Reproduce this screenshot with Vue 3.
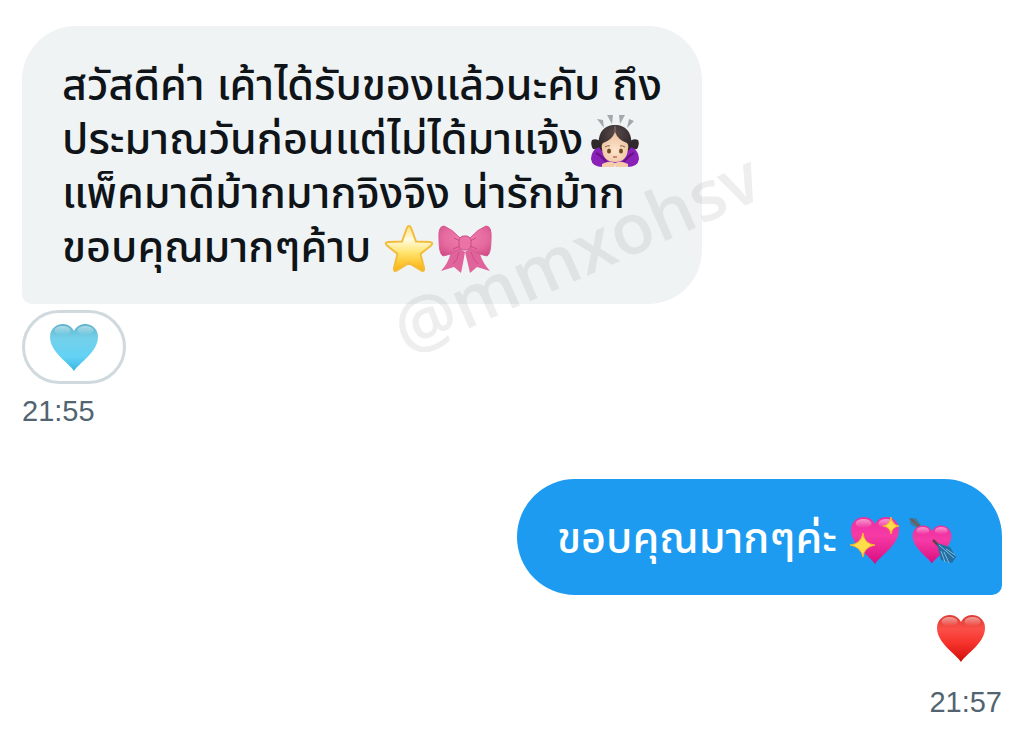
<script setup>
const received = {
  lines: [
    { text: 'สวัสดีค่า เค้าได้รับของแล้วนะคับ ถึง', icons: [] },
    { text: 'ประมาณวันก่อนแต่ไม่ได้มาแจ้ง', icons: ['bowing'] },
    { text: 'แพ็คมาดีม้ากมากจิงจิง น่ารักม้าก', icons: [] },
    { text: 'ขอบคุณมากๆค้าบ ', icons: ['star', 'ribbon'] },
  ],
  time: '21:55',
}
const sent = { text: 'ขอบคุณมากๆค่ะ ', time: '21:57' }
</script>

<template>
  <main class="chat">
    <svg class="defs" aria-hidden="true">
      <defs>
        <linearGradient id="gold" x1="0" y1="0" x2="0" y2="1">
          <stop offset="0" stop-color="#ffe27a" /><stop offset=".3" stop-color="#fffbe0" />
          <stop offset=".6" stop-color="#ffe36a" /><stop offset="1" stop-color="#fbae08" />
        </linearGradient>
        <linearGradient id="blue" x1="0" y1="0" x2="0" y2="1">
          <stop offset="0" stop-color="#5fb2cb" /><stop offset=".3" stop-color="#74d0ea" />
          <stop offset=".7" stop-color="#63d2f5" /><stop offset="1" stop-color="#38b6e4" />
        </linearGradient>
        <linearGradient id="red" x1="0" y1="0" x2="0" y2="1">
          <stop offset="0" stop-color="#dc3a34" /><stop offset=".3" stop-color="#fa4f47" />
          <stop offset=".6" stop-color="#f6322c" /><stop offset="1" stop-color="#cf0d0a" />
        </linearGradient>
        <linearGradient id="pink" x1="0" y1="0" x2="0" y2="1">
          <stop offset="0" stop-color="#ec2f9f" /><stop offset=".4" stop-color="#f63aa6" />
          <stop offset="1" stop-color="#d90d80" />
        </linearGradient>
        <linearGradient id="shine" x1="0" y1="0" x2="0" y2="1">
          <stop offset="0" stop-color="#fff" stop-opacity=".5" /><stop offset="1" stop-color="#fff" stop-opacity="0" />
        </linearGradient>
        <radialGradient id="bow" cx=".5" cy=".4" r=".7">
          <stop offset="0" stop-color="#f07fb0" /><stop offset=".6" stop-color="#e56a9f" />
          <stop offset="1" stop-color="#cf4c85" />
        </radialGradient>
        <radialGradient id="skin" cx=".5" cy=".6" r=".6">
          <stop offset="0" stop-color="#fde5ce" /><stop offset="1" stop-color="#ecc09c" />
        </radialGradient>
        <radialGradient id="hair" cx=".5" cy=".3" r=".7">
          <stop offset="0" stop-color="#594a49" /><stop offset="1" stop-color="#282225" />
        </radialGradient>
        <symbol id="heart" viewBox="0 0 52 52">
          <path d="M26 50C21 42 2 31 2 16C2 7 9 3 15 3C20 3 24 6 26 10C28 6 32 3 37 3C43 3 50 7 50 16C50 31 31 42 26 50Z" />
          <ellipse cx="14.500" cy="9.500" rx="8" ry="4.500" fill="url(#shine)" />
          <ellipse cx="37.500" cy="9.500" rx="8" ry="4.500" fill="url(#shine)" />
        </symbol>
      </defs>
    </svg>

    <section class="message incoming">
      <div class="bubble">
        <p v-for="line in received.lines" :key="line.text" class="line">
          {{ line.text }}<template v-for="icon in line.icons" :key="icon">
            <svg v-if="icon === 'bowing'" class="emoji tall" viewBox="0 0 52 56" role="img" aria-label="bowing">
              <path d="M8 6l6 1 1 8zM18 2h6l-1 9zM30 2h6l-5 9zM40 6l5 2-7 7z" fill="#a3a8aa" />
              <path d="M3 27q4-2 8 1v9l-7-1q-3-5-1-9zM49 27q-4-2-8 1v9l7-1q3-5 1-9z" fill="#30282b" />
              <path d="M2 46Q3 34 13 34H39Q49 34 50 46Q49 54 38 54L26 50L14 54Q3 54 2 46Z" fill="#8b22b8" />
              <path d="M7 40q6 3 12 11M45 40q-6 3-12 11" stroke="#671386" stroke-width="2" fill="none" />
              <path d="M10 34C8 20 15 12 26 12S44 20 42 34L37 41H15Z" fill="url(#hair)" />
              <path d="M13 36Q12 32 14 30Q23 27 26 19Q29 27 38 30Q40 32 39 36Q38 49 26 49Q14 49 13 36Z" fill="url(#skin)" />
              <path d="M26 13V20" stroke="#8b7977" />
              <path d="M13 51q6-3 10-2l3 1 3-1q4-1 10 2v3H27l-1-2-1 2H13z" fill="#f4cca9" />
              <ellipse cx="20" cy="38" rx="2" ry="2.500" fill="#6d4b1e" /><ellipse cx="32" cy="38" rx="2" ry="2.500" fill="#6d4b1e" />
              <path d="M16 34q3-2 5-1M31 33q2-1 5 1" stroke="#80603f" fill="none" />
              <path d="M24 44h4" stroke="#c06a58" stroke-width="1.500" />
            </svg>
            <svg v-else-if="icon === 'star'" class="emoji" viewBox="0 0 52 52" role="img" aria-label="star">
              <path d="M26 3Q27.500 3 28.500 6L33 18.500L47 19Q51 19.500 48 22.500L37.500 31L41 45Q41.500 49.500 38 47.500L26 40L14 47.500Q10.500 49.500 11 45L14.500 31L4 22.500Q1 19.500 5 19L19 18.500L23.500 6Q24.500 3 26 3Z" fill="url(#gold)" stroke="#f2bd3d" stroke-width="2" />
            </svg>
            <svg v-else class="emoji ribbon" viewBox="0 0 56 52" role="img" aria-label="ribbon">
              <path d="M22 25L28 29Q26 41 24 50L17 44L4 48Q13 38 14 27ZM34 25L28 29Q31 41 33 50L40 44L53 48Q44 38 42 27Z" fill="#e0649b" />
              <path d="M22 29q-1 8-6 12M34 29q2 8 7 12" stroke="#cc4d85" fill="none" />
              <path d="M23 15Q15 6 7 3Q1 3 2 16Q2 31 6 33Q15 32 24 25ZM33 15Q41 6 49 3Q55 3 54 16Q54 31 50 33Q41 32 32 25Z" fill="url(#bow)" stroke="#d95a93" />
              <path d="M23 18L17 15M23 23L16 26M33 18L39 15M33 23L40 26" stroke="#cc4b84" />
              <rect x="22" y="13" width="12" height="14" rx="5" fill="#ea74a6" stroke="#cc4b84" />
            </svg>
          </template>
        </p>
        <span class="watermark" aria-hidden="true">@mmxohsv</span>
      </div>
      <button class="reaction" type="button" aria-label="blue heart">
        <svg class="emoji" fill="url(#blue)" aria-hidden="true"><use href="#heart" /></svg>
      </button>
      <time class="time">{{ received.time }}</time>
    </section>

    <section class="message outgoing">
      <div class="bubble">
        <p class="line">
          {{ sent.text }}<svg class="emoji" viewBox="0 0 52 52" role="img" aria-label="sparkling heart">
            <use href="#heart" fill="url(#pink)" />
            <path d="M14 19Q15 30 26 31Q15 33 14 43Q12 33 1 31Q12 30 14 19ZM42 3Q43 11 50 12Q43 13 42 20Q41 13 34 12Q41 11 42 3Z" fill="#ffdc4a" stroke="#f5b32c" />
          </svg><svg class="emoji arrow" viewBox="0 0 52 52" role="img" aria-label="heart with arrow">
            <path d="M2 4L9 4L14 11L10 14L4 11Z" fill="#397da8" /><path d="M4 5L15 15" stroke="#75594e" stroke-width="2" />
            <use href="#heart" x="4" y="9" width="42" height="42" fill="url(#pink)" />
            <path d="M26 26L34 34" stroke="#614346" stroke-width="2.500" />
            <path d="M30 29L43 33L49 43L45 49L34 46Z" fill="#246f9f" />
            <path d="M32 31L47 44M34 37L38 48M37 38L42 49M39 35L48 41" stroke="#7bbce2" />
          </svg>
        </p>
      </div>
      <button class="reaction" type="button" aria-label="red heart">
        <svg class="emoji" fill="url(#red)" aria-hidden="true"><use href="#heart" /></svg>
      </button>
      <time class="time">{{ sent.time }}</time>
    </section>
  </main>
</template>

<style>
body { margin: 0; background: #fff; }
</style>

<style scoped>
.chat {
  display: flex;
  flex-direction: column;
  gap: 51px;
  padding: 26px 22px 20px;
  font-family: "Liberation Sans", "Noto Sans Thai", "Noto Sans", sans-serif;
}
.defs { position: absolute; width: 0; height: 0; }
.message { display: flex; flex-direction: column; align-items: flex-start; }
.outgoing { align-items: flex-end; }
.bubble {
  position: relative;
  padding: 32px 40px 30px;
  border-radius: 54px 54px 54px 10px;
  background: #eff3f4;
  color: #0f1419;
}
.outgoing .bubble { padding-right: 43px; border-radius: 58px 58px 10px 58px; background: #1d9bf0; color: #fff; }
.line { margin: 0; height: 54px; font-size: 43px; font-weight: 500; line-height: 54px; white-space: pre-wrap; }
.emoji { width: 52px; height: 52px; margin-top: -4px; vertical-align: middle; }
.tall { height: 56px; margin-left: 6px; }
.ribbon { width: 56px; margin-left: 2px; }
.arrow { margin-left: 6px; }
.reaction {
  display: flex;
  align-items: center;
  justify-content: center;
  box-sizing: border-box;
  width: 104px;
  height: 74px;
  margin-top: 6px;
  padding: 0;
  border: 3px solid #cfd9de;
  border-radius: 37px;
  background: #fff;
}
.reaction .emoji { margin: 0; }
.outgoing .reaction { width: 82px; border: 0; }
.time { margin-top: 10px; color: #536471; font-size: 29px; line-height: 34px; }
.watermark {
  position: absolute;
  left: 390px;
  bottom: -64px;
  color: rgba(110, 100, 100, 0.11);
  font-family: "Open Sans", sans-serif;
  font-size: 70px;
  font-weight: 600;
  line-height: 80px;
  transform: rotate(-24deg);
  transform-origin: left bottom;
  pointer-events: none;
}
</style>
